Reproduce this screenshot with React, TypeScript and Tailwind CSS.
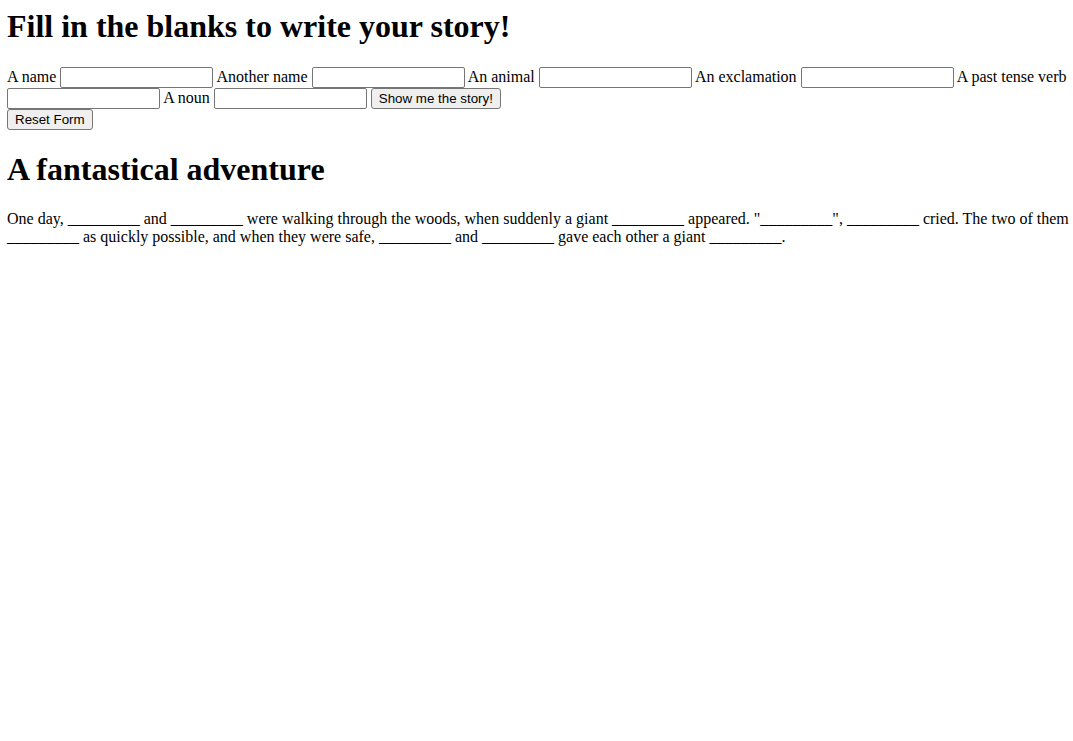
// App.tsx — mad-libs style story form, plain browser look
const blank = '_________';

const fields = [
  'A name',
  'Another name',
  'An animal',
  'An exclamation',
  'A past tense verb',
  'A noun',
];

const inputCls =
  'inline-block w-[153px] h-[21px] border border-[#767676] rounded-[2px] bg-white px-[2px] py-[1px] text-[13.333px] font-["Liberation_Sans",Arial,sans-serif] align-baseline';

const buttonCls =
  'inline-block h-[21px] border border-[#767676] rounded-[3px] bg-[#efefef] px-[7px] py-[1px] text-[13.333px] leading-[normal] text-black font-["Liberation_Sans",Arial,sans-serif] align-baseline';

export default function App() {
  return (
    <div className='min-h-screen bg-white pt-2 pl-[7px] pr-[2px] text-black text-base leading-[normal] font-["Liberation_Serif","Times_New_Roman",serif]'>
      <h1 className="text-[32px] font-bold leading-[normal] mb-[22px]">Fill in the blanks to write your story!</h1>

      <form onSubmit={(e) => e.preventDefault()}>
        {fields.map((f) => (
          <span key={f}>
            {f} <input type="text" className={inputCls} />{' '}
          </span>
        ))}
        <button type="submit" className={buttonCls}>Show me the story!</button>
        <br />
        <button type="reset" className={buttonCls}>Reset Form</button>
      </form>

      <h1 className="text-[32px] font-bold leading-[normal] my-[21.44px]">A fantastical adventure</h1>
      <p className="my-4">
        One day, {blank} and {blank} were walking through the woods, when suddenly a giant {blank} appeared. "{blank}", {blank} cried. The two of them {blank} as quickly possible, and when they were safe, {blank} and {blank} gave each other a giant {blank}.
      </p>
    </div>
  );
}
